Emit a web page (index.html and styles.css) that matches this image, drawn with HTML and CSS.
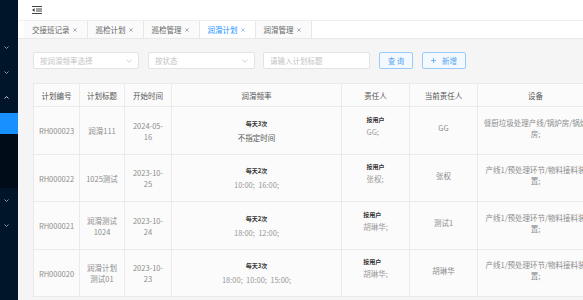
FILE: index.html
```html
<!DOCTYPE html>
<html lang="zh">
<head>
<meta charset="utf-8">
<title>润滑计划</title>
<link rel="stylesheet" href="styles.css">
</head>
<body>
<div class="app">
  <aside class="sider">
    <div class="menu-item"><svg class="chev" width="5" height="3" viewBox="0 0 5 3"><polyline points="0.5,0.5 2.5,2.5 4.5,0.5"/></svg></div>
    <div class="menu-item"><svg class="chev" width="5" height="3" viewBox="0 0 5 3"><polyline points="0.5,0.5 2.5,2.5 4.5,0.5"/></svg></div>
    <div class="menu-item"><svg class="chev up" width="5" height="3" viewBox="0 0 5 3"><polyline points="0.5,2.5 2.5,0.5 4.5,2.5"/></svg></div>
    <div class="submenu">
      <div class="sub-active"></div>
      <div class="sub-rest"></div>
    </div>
    <div class="menu-item"><svg class="chev" width="5" height="3" viewBox="0 0 5 3"><polyline points="0.5,0.5 2.5,2.5 4.5,0.5"/></svg></div>
    <div class="menu-item"><svg class="chev" width="5" height="3" viewBox="0 0 5 3"><polyline points="0.5,0.5 2.5,2.5 4.5,0.5"/></svg></div>
  </aside>

  <div class="main">
    <header class="topbar">
      <svg class="fold" width="10" height="8" viewBox="0 0 10 8">
        <line x1="0" y1="0.5" x2="10" y2="0.5"/>
        <line x1="4" y1="3" x2="10" y2="3"/>
        <line x1="4" y1="5" x2="10" y2="5"/>
        <line x1="0" y1="7.5" x2="10" y2="7.5"/>
        <polygon class="tri" points="0,4 2.6,2.1 2.6,5.9"/>
      </svg>
    </header>

    <nav class="tabs">
      <div class="tab"><span>交接班记录</span><svg class="close" width="4" height="4" viewBox="0 0 4 4"><path d="M0.3 0.3L3.7 3.7M3.7 0.3L0.3 3.7"/></svg></div>
      <div class="tab"><span>巡检计划</span><svg class="close" width="4" height="4" viewBox="0 0 4 4"><path d="M0.3 0.3L3.7 3.7M3.7 0.3L0.3 3.7"/></svg></div>
      <div class="tab"><span>巡检管理</span><svg class="close" width="4" height="4" viewBox="0 0 4 4"><path d="M0.3 0.3L3.7 3.7M3.7 0.3L0.3 3.7"/></svg></div>
      <div class="tab active"><span>润滑计划</span><svg class="close" width="4" height="4" viewBox="0 0 4 4"><path d="M0.3 0.3L3.7 3.7M3.7 0.3L0.3 3.7"/></svg></div>
      <div class="tab"><span>润滑管理</span><svg class="close" width="4" height="4" viewBox="0 0 4 4"><path d="M0.3 0.3L3.7 3.7M3.7 0.3L0.3 3.7"/></svg></div>
    </nav>

    <section class="content">
      <div class="filters">
        <div class="field sel w1"><span class="ph">按润滑频率选择</span><svg class="arrow" width="6" height="4" viewBox="0 0 6 4"><polyline points="0.5,0.7 3,3.2 5.5,0.7"/></svg></div>
        <div class="field sel w2"><span class="ph">按状态</span><svg class="arrow" width="6" height="4" viewBox="0 0 6 4"><polyline points="0.5,0.7 3,3.2 5.5,0.7"/></svg></div>
        <div class="field w3"><span class="ph">请输入计划标题</span></div>
        <button class="btn b-query">查 询</button>
        <button class="btn b-add"><svg class="plus" width="5" height="5" viewBox="0 0 5 5"><path d="M2.5 0V5M0 2.5H5"/></svg><span>新增</span></button>
      </div>

      <table class="grid">
        <colgroup>
          <col class="c1"><col class="c2"><col class="c3"><col class="c4"><col class="c5"><col class="c6"><col class="c7">
        </colgroup>
        <thead>
          <tr class="hrow">
            <th>计划编号</th><th>计划标题</th><th>开始时间</th><th>润滑频率</th><th>责任人</th><th>当前责任人</th><th>设备</th>
          </tr>
        </thead>
        <tbody>
          <tr class="r48">
            <td>RH000023</td>
            <td>润滑111</td>
            <td>2024-05-16</td>
            <td><div class="f-label">每天3次</div><div class="f-val dark">不指定时间</div></td>
            <td class="up"><div class="owner"><div class="o-label">按用户</div><div class="o-name">GG;</div></div></td>
            <td class="up">GG</td>
            <td class="up">餐厨垃圾处理产线/锅炉房/锅炉房;</td>
          </tr>
          <tr class="r47">
            <td>RH000022</td>
            <td>1025测试</td>
            <td>2023-10-25</td>
            <td><div class="f-label">每天2次</div><div class="f-val">10:00;&nbsp;&nbsp;16:00;</div></td>
            <td class="up"><div class="owner"><div class="o-label">按用户</div><div class="o-name">张权;</div></div></td>
            <td class="up">张权</td>
            <td class="up">产线1/预处理环节/物料接料装置;</td>
          </tr>
          <tr class="r48">
            <td>RH000021</td>
            <td>润滑测试1024</td>
            <td>2023-10-24</td>
            <td><div class="f-label">每天2次</div><div class="f-val">18:00;&nbsp;&nbsp;12:00;</div></td>
            <td class="up"><div class="owner"><div class="o-label">按用户</div><div class="o-name">胡琳华;</div></div></td>
            <td class="up">测试1</td>
            <td class="up">产线1/预处理环节/物料接料装置;</td>
          </tr>
          <tr class="r47">
            <td>RH000020</td>
            <td>润滑计划测试01</td>
            <td>2023-10-23</td>
            <td><div class="f-label">每天3次</div><div class="f-val">18:00;&nbsp;&nbsp;10:00;&nbsp;&nbsp;15:00;</div></td>
            <td class="up"><div class="owner"><div class="o-label">按用户</div><div class="o-name">胡琳华;</div></div></td>
            <td class="up">胡琳华</td>
            <td class="up">产线1/预处理环节/物料接料装置;</td>
          </tr>
        </tbody>
      </table>
    </section>
  </div>
</div>
</body>
</html>
```

FILE: styles.css
```css
* { box-sizing: border-box; }

html, body {
  margin: 0;
  padding: 0;
}

body {
  width: 583px;
  height: 300px;
  overflow: hidden;
  font-family: "Noto Sans CJK SC", "Noto Sans", sans-serif;
  font-size: 7.5px;
  color: #666;
}

.app {
  display: flex;
  height: 300px;
}

/* ---------- sidebar ---------- */
.sider {
  width: 18px;
  flex: none;
  background: #001529;
  padding-top: 35px;
  display: flex;
  flex-direction: column;
}

.menu-item {
  height: 25px;
  display: flex;
  align-items: center;
  padding-left: 4px;
}

.chev polyline {
  fill: none;
  stroke: #8b97a5;
  stroke-width: 1;
}

.chev.up polyline {
  stroke: #c9d0d8;
}

.submenu {
  margin-top: 3px;
}

.sub-active {
  height: 21px;
  background: #1890ff;
}

.sub-rest {
  height: 54px;
  background: #000c17;
}

/* ---------- main ---------- */
.main {
  flex: 1;
  min-width: 0;
  display: flex;
  flex-direction: column;
  background: #f5f5f5;
  overflow: hidden;
}

.topbar {
  height: 21px;
  flex: none;
  background: #fff;
  border-bottom: 1px solid #eeeeee;
  display: flex;
  align-items: center;
  padding-left: 14px;
}

.fold line {
  stroke: #444;
  stroke-width: 1;
}

.fold .tri {
  fill: #444;
}

.tabs {
  height: 18px;
  flex: none;
  background: #fff;
  border-bottom: 1px solid #e8e8e8;
  display: flex;
  padding-left: 6px;
}

.tab {
  display: flex;
  align-items: center;
  padding: 0 10px 0 8px;
  background: #fafafa;
  border-right: 1px solid #e8e8e8;
  color: #666;
  white-space: nowrap;
}

.tab.active {
  background: #fff;
  color: #1890ff;
}

.close {
  margin-left: 3px;
}

.close path {
  stroke: #999;
  stroke-width: 0.8;
}

.tab.active .close path {
  stroke: #7fb9f0;
}

/* ---------- content ---------- */
.content {
  padding: 13px 0 0 15px;
}

.filters {
  display: flex;
  height: 17px;
  margin-bottom: 14px;
}

.field {
  height: 17px;
  background: #fff;
  border: 1px solid #e3e3e3;
  border-radius: 2px;
  display: flex;
  align-items: center;
  justify-content: space-between;
  padding: 0 6px 0 6px;
}

.ph {
  color: #c4c4c4;
  white-space: nowrap;
}

.arrow polyline {
  fill: none;
  stroke: #c4c4c4;
  stroke-width: 0.8;
}

.w1 { width: 106px; margin-right: 9px; }
.w2 { width: 107px; margin-right: 8px; }
.w3 { width: 107px; margin-right: 9px; }

.btn {
  height: 17px;
  border: 1px solid #98cbfb;
  border-radius: 2px;
  background: #f3f9ff;
  color: #5aa6f2;
  font-family: inherit;
  font-size: 7.5px;
  padding: 0;
  display: flex;
  align-items: center;
  justify-content: center;
}

.b-query {
  width: 34px;
  margin-right: 9px;
}

.b-add {
  width: 44px;
  gap: 6px;
}

.plus path {
  stroke: #5aa6f2;
  stroke-width: 0.8;
}

/* ---------- table ---------- */
.grid {
  width: 560px;
  border-collapse: collapse;
  table-layout: fixed;
  background: #fbfbfb;
}

.c1 { width: 46px; }
.c2 { width: 45px; }
.c3 { width: 47px; }
.c4 { width: 170px; }
.c5 { width: 68px; }
.c6 { width: 68px; }
.c7 { width: 116px; }

.grid th,
.grid td {
  border: 1px solid #eaeaea;
  padding: 0 4px;
  text-align: center;
  vertical-align: middle;
  line-height: 11px;
  font-weight: normal;
}

.grid th {
  color: #555;
}

.grid td {
  color: #8c8c8c;
}

.hrow { height: 23px; }
.r48 { height: 48px; }
.r47 { height: 47px; }

.grid td.up {
  padding-bottom: 6px;
}

.f-label {
  font-size: 6px;
  font-weight: bold;
  color: #333;
  line-height: 9px;
  margin-bottom: 4px;
}

.f-val {
  color: #999;
}

.f-val.dark {
  color: #555;
}

.owner {
  display: inline-block;
  text-align: left;
  padding-bottom: 4px;
}

.o-label {
  font-size: 6px;
  font-weight: bold;
  color: #333;
  line-height: 9px;
  margin-bottom: 2px;
}

.o-name {
  color: #999;
}
```
